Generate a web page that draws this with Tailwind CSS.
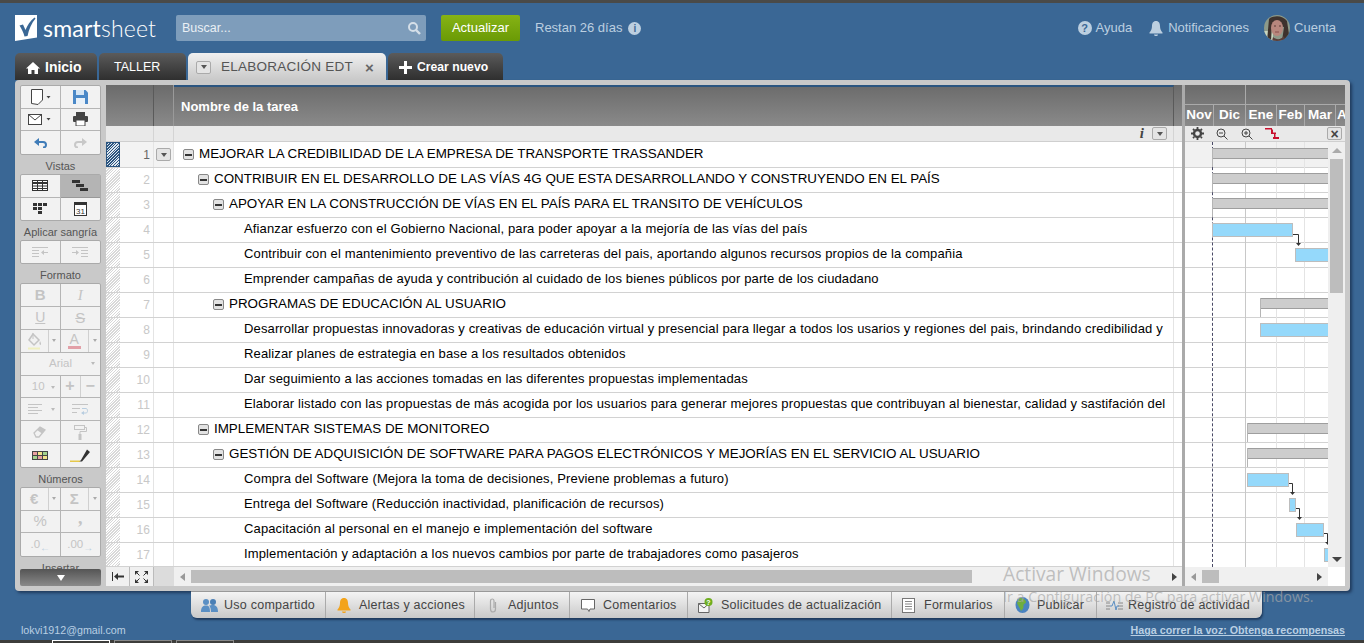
<!doctype html>
<html>
<head>
<meta charset="UTF-8" />
<title>Smartsheet</title>
<script src="https://cdn.jsdelivr.net/npm/@tailwindcss/browser@4"></script>
</head>
<body class="w-[1364px] h-[643px] overflow-hidden relative bg-[#3a6795] font-['Liberation_Sans',Arial,sans-serif] text-[13px] text-black">

<!-- top strip -->
<div class="h-[3px] bg-[#4a4a48]"></div>

<!-- header -->
<div class="h-[50px] pt-[12px] pl-[15px] pr-[28px] flex items-start">
    <svg class="w-[23px] h-[26px] shrink-0" viewBox="0 0 23 26"><path fill="#fff" d="M0 0H22V22.5L0 26Z"/><path fill="#3a6795" d="M4.5 10.5L8 9.500L10.500 15C12.500 10 15 6 19.500 2.500L20.500 3.500C16.500 8.500 14 14 12.500 21L9.500 21.500C8.500 17.500 6.500 13.500 4.500 10.500Z"/></svg>
    <div class="w-[138px] pl-[5px] h-[26px] leading-[26px] text-[23px] text-white font-['Lato',sans-serif] tracking-[0.2px]">smart<span class="font-light">sheet</span></div>
    <div class="w-[250px] h-[26px] rounded-[2px] bg-[#7e9dbb] flex items-center pl-[6px] pr-[5px] text-[#eaf0f5] text-[12.500px]">
        <span class="flex-1">Buscar...</span>
        <svg class="w-[14px] h-[14px]" viewBox="0 0 14 14"><circle cx="6" cy="6" r="4" fill="none" stroke="#d5dfe8" stroke-width="2"/><path d="M9 9L13 13" stroke="#d5dfe8" stroke-width="2.400"/></svg>
    </div>
    <div class="ml-[15px] w-[79px] h-[26px] rounded-[2px] bg-gradient-to-b from-[#86b315] to-[#6a9a05] text-white text-[13px] flex items-center justify-center">Actualizar</div>
    <div class="ml-[15px] h-[26px] flex items-center text-[#bccfe0] text-[13px]">Restan 26 días
        <span class="ml-[6px] w-[13px] h-[13px] rounded-full bg-[#bccfe0] text-[#3a6795] text-[10px] font-bold flex items-center justify-center">i</span>
    </div>
    <div class="ml-auto h-[26px] flex items-center text-[#bccfe0] text-[13px]">
        <span class="w-[14px] h-[14px] rounded-full bg-[#bccfe0] text-[#3a6795] text-[11px] font-bold flex items-center justify-center mr-[4px]">?</span>
        <span>Ayuda</span>
        <svg class="ml-[17px] mr-[5px] w-[14px] h-[15px]" viewBox="0 0 14 15"><path fill="#bccfe0" d="M7 0C10 0 11 2.500 11 5C11 8 12 10 13.500 11.500V12.500H.5V11.500C2 10 3 8 3 5C3 2.500 4 0 7 0ZM5 13.500H9C9 14.500 8 15 7 15S5 14.500 5 13.500Z"/></svg>
        <span>Notificaciones</span>
        <svg class="ml-[15px] mr-[4px] w-[26px] h-[26px]" viewBox="0 0 26 26"><defs><clipPath id="av"><circle cx="13" cy="13" r="13"/></clipPath></defs><g clip-path="url(#av)"><rect width="26" height="26" fill="#8d9a8a"/><rect x="0" y="16" width="9" height="10" fill="#c9d6c0"/><path d="M5 4C9 0 19 0 23 6L26 26H18L20 12L8 10L7 26H3Z" fill="#3e322d"/><ellipse cx="13" cy="13" rx="6" ry="8" fill="#b8877d"/><path d="M9 22C12 25 17 25 20 21L21 26H8Z" fill="#5a3d3a"/><path d="M10 11H12M15 11H17" stroke="#5b3b36" stroke-width="1"/><path d="M11 17H15" stroke="#8a4f4d" stroke-width="1"/></g></svg>
        <span>Cuenta</span>
    </div>
</div>

<!-- sheet tabs -->
<div class="h-[27px] pl-[15px] flex items-stretch">
    <div class="w-[82px] pt-[2px] rounded-t-[5px] bg-gradient-to-b from-[#5b5b5b] to-[#2f2f2f] text-white text-[14px] font-bold flex items-center pl-[11px]">
        <svg class="w-[14px] h-[12px] mr-[5px]" viewBox="0 0 14 12"><path fill="#fff" d="M7 0L14 6.500H12V12H8.500V8H5.500V12H2V6.500H0Z"/></svg>Inicio
    </div>
    <div class="ml-[2px] w-[87px] pt-[1px] rounded-t-[5px] bg-gradient-to-b from-[#5b5b5b] to-[#2f2f2f] text-white text-[12.500px] flex items-center pl-[15px]">TALLER</div>
    <div class="ml-[2px] w-[198px] pt-[1px] rounded-t-[5px] bg-gradient-to-b from-[#f0f0f0] to-[#c9c9c9] text-[#555] text-[13.500px] flex items-center pl-[8px]">
        <span class="w-[15px] h-[13px] border border-[#aaa] rounded-[2px] bg-[#e4e4e4] flex items-center justify-center mr-[10px]"><span class="border-x-[3.500px] border-x-transparent border-t-[4px] border-t-[#555]"></span></span>
        <span class="tracking-[0.25px]">ELABORACIÓN EDT</span>
        <span class="ml-[12px] text-[15px] font-bold leading-none text-[#666]">×</span>
    </div>
    <div class="ml-[2px] w-[115px] pt-[1px] rounded-t-[5px] bg-gradient-to-b from-[#5b5b5b] to-[#2f2f2f] text-white text-[12.200px] font-bold flex items-center pl-[11px]">
        <svg class="w-[13px] h-[13px] mr-[5px]" viewBox="0 0 13 13"><path d="M6.500 0V13M0 6.500H13" stroke="#fff" stroke-width="3"/></svg>Crear nuevo
    </div>
</div>

<!-- main panel -->
<div class="ml-[15px] w-[1335px] h-[511px] rounded-[4px] bg-[#c9c9c9] shadow-[2px_2px_3px_rgba(20,40,70,0.7)] pt-[5px] pr-[5px] pb-[5px] flex">

    <!-- toolbar -->
    <div class="w-[91px] h-[501px] shrink-0 pl-[5px] overflow-hidden flex flex-col relative text-[#555]">
        <div class="w-[81px] h-[70px] shrink-0 grid grid-cols-2 auto-rows-fr border border-[#aaa] rounded-[2px] bg-[#f2f2f2]">
            <div class="border-r border-b border-[#b5b5b5] flex items-center justify-center">
                <svg class="w-[24px] h-[16px]" viewBox="0 0 24 16"><path d="M3.500 .5H14.500V11L10 15.500L3.500 14.500Z" fill="#fff" stroke="#444"/><path d="M18.500 7H22.500L20.500 9.500Z" fill="#444"/></svg>
            </div>
            <div class="border-b border-[#b5b5b5] flex items-center justify-center">
                <svg class="w-[15px] h-[15px]" viewBox="0 0 15 15"><path fill="#4a88c7" d="M0 1H12.500L15 3.500V15H0Z"/><rect x="3" y="1" width="8" height="5" fill="#d6e6f5"/><rect x="3" y="9" width="9" height="6" fill="#e8f1f9"/></svg>
            </div>
            <div class="border-r border-b border-[#b5b5b5] flex items-center justify-center">
                <svg class="w-[24px] h-[11px]" viewBox="0 0 24 11"><rect x=".5" y=".5" width="13" height="10" fill="#fff" stroke="#444"/><path d="M.5 .5L7 6L13.500 .5" fill="none" stroke="#444"/><path d="M18.500 4H22.500L20.500 6.500Z" fill="#444"/></svg>
            </div>
            <div class="border-b border-[#b5b5b5] flex items-center justify-center">
                <svg class="w-[15px] h-[14px]" viewBox="0 0 15 14"><rect x="3" y="0" width="9" height="4" fill="#444"/><rect x="0" y="4" width="15" height="6" rx="1" fill="#444"/><rect x="3" y="8" width="9" height="6" fill="#fff" stroke="#444"/></svg>
            </div>
            <div class="border-r border-[#b5b5b5] flex items-center justify-center">
                <svg class="w-[13px] h-[11px]" viewBox="0 0 13 11"><path d="M3 5H9C11 5 12 6.500 12 8C12 9.500 11 10.500 9 10.500" fill="none" stroke="#3f7cb8" stroke-width="2"/><path d="M0 5L5 1V9Z" fill="#3f7cb8"/></svg>
            </div>
            <div class="flex items-center justify-center">
                <svg class="w-[13px] h-[11px]" viewBox="0 0 13 11"><path d="M10 5H4C2 5 1 6.500 1 8C1 9.500 2 10.500 4 10.500" fill="none" stroke="#c8c8c8" stroke-width="2"/><path d="M13 5L8 1V9Z" fill="#c8c8c8"/></svg>
            </div>
        </div>

        <div class="w-[81px] h-[19px] shrink-0 pt-[3px] text-center text-[11px] leading-[16px]">Vistas</div>
        <div class="w-[81px] h-[47px] shrink-0 grid grid-cols-2 auto-rows-fr border border-[#aaa] rounded-[2px] bg-[#f2f2f2]">
            <div class="border-r border-b border-[#b5b5b5] flex items-center justify-center">
                <svg class="w-[16px] h-[11px]" viewBox="0 0 16 11"><rect x=".5" y=".5" width="15" height="10" fill="#fff" stroke="#333"/><path d="M0 3H16" stroke="#333" stroke-width="2"/><path d="M0 6H16M0 8.500H16M5.500 0V11M10.500 0V11" stroke="#333"/></svg>
            </div>
            <div class="border-b border-[#999] bg-[#b4b4b4] flex items-center justify-center">
                <svg class="w-[16px] h-[11px]" viewBox="0 0 16 11"><path d="M0 0H8V3H0ZM4 4H12V7H4ZM8 8H16V11H8Z" fill="#333"/></svg>
            </div>
            <div class="border-r border-[#b5b5b5] flex items-center justify-center">
                <svg class="w-[14px] h-[11px]" viewBox="0 0 14 11"><path d="M0 0H4V3H0ZM5 0H9V3H5ZM10 0H14V3H10ZM0 4H4V7H0ZM5 4H9V7H5ZM5 8H9V11H5Z" fill="#333"/></svg>
            </div>
            <div class="flex items-center justify-center">
                <svg class="w-[13px] h-[15px]" viewBox="0 0 13 15"><rect x=".5" y="1.500" width="12" height="13" fill="#fff" stroke="#333"/><path d="M0 1H13V4H0Z" fill="#333"/><text x="6.500" y="12.500" text-anchor="middle" font-size="8" fill="#333" font-family="Liberation Sans">31</text></svg>
            </div>
        </div>

        <div class="w-[81px] h-[19px] shrink-0 pt-[3px] text-center text-[11px] leading-[16px]">Aplicar sangría</div>
        <div class="w-[81px] h-[24px] shrink-0 grid grid-cols-2 auto-rows-fr border border-[#aaa] rounded-[2px] bg-[#f2f2f2]">
            <div class="border-r border-[#b5b5b5] flex items-center justify-center">
                <svg class="w-[16px] h-[10px]" viewBox="0 0 16 10"><path d="M0 .5H16M0 3.500H7M0 6.500H7M0 9.500H7" stroke="#c4c4c4"/><path d="M9 5.500L12 3V5H16V6H12V8Z" fill="#c4c4c4"/></svg>
            </div>
            <div class="flex items-center justify-center">
                <svg class="w-[16px] h-[10px]" viewBox="0 0 16 10"><path d="M0 .5H16M9 3.500H16M9 6.500H16M9 9.500H16" stroke="#c4c4c4"/><path d="M7 5.500L4 3V5H0V6H4V8Z" fill="#c4c4c4"/></svg>
            </div>
        </div>

        <div class="w-[81px] h-[19px] shrink-0 pt-[3px] text-center text-[11px] leading-[16px]">Formato</div>
        <div class="w-[81px] h-[185px] shrink-0 grid grid-cols-2 auto-rows-fr border border-[#aaa] rounded-[2px] bg-[#f2f2f2] text-[#c4c4c4]">
            <div class="border-r border-b border-[#b5b5b5] flex items-center justify-center text-[15px] font-bold">B</div>
            <div class="border-b border-[#b5b5b5] flex items-center justify-center text-[15px] italic font-['Liberation_Serif',serif]">I</div>
            <div class="border-r border-b border-[#b5b5b5] flex items-center justify-center text-[14px] underline">U</div>
            <div class="border-b border-[#b5b5b5] flex items-center justify-center text-[15px] line-through">S</div>
            <div class="border-r border-b border-[#b5b5b5] flex items-stretch">
                <div class="flex-1 flex items-center justify-center"><svg class="w-[15px] h-[18px]" viewBox="0 0 15 18"><path d="M6 2L12 8L7 13L2 8Z" fill="none" stroke="#c4c4c4" stroke-width="1.500"/><path d="M6 1V7" stroke="#c4c4c4"/><path d="M13 9C14 11 14.500 12 13.500 13C12.500 13 12 11 13 9Z" fill="#c4c4c4"/><rect x="1" y="15.500" width="12" height="2" fill="#efefc0"/></svg></div>
                <div class="w-[12px] border-l border-[#d0d0d0] flex items-center justify-center"><span class="border-x-[2.500px] border-x-transparent border-t-[3px] border-t-[#aaa]"></span></div>
            </div>
            <div class="border-b border-[#b5b5b5] flex items-stretch">
                <div class="flex-1 flex flex-col items-center justify-center leading-[13px] text-[14px]">A<span class="w-[13px] h-[3px] bg-[#e2a0a8]"></span></div>
                <div class="w-[12px] border-l border-[#d0d0d0] flex items-center justify-center"><span class="border-x-[2.500px] border-x-transparent border-t-[3px] border-t-[#aaa]"></span></div>
            </div>
            <div class="col-span-2 border-b border-[#b5b5b5] flex items-center justify-center text-[11.500px] relative">Arial<span class="absolute right-[5px] top-[9px] border-x-[2.500px] border-x-transparent border-t-[3px] border-t-[#bbb]"></span></div>
            <div class="border-r border-b border-[#b5b5b5] flex items-center justify-center text-[11.500px] relative pr-[4px]">10<span class="absolute right-[5px] top-[10px] border-x-[2.500px] border-x-transparent border-t-[3px] border-t-[#bbb]"></span></div>
            <div class="border-b border-[#b5b5b5] flex items-stretch">
                <div class="w-[20px] border-r border-[#d0d0d0] flex items-center justify-center text-[16px] font-bold">+</div>
                <div class="flex-1 flex items-center justify-center text-[16px] font-bold">−</div>
            </div>
            <div class="border-r border-b border-[#b5b5b5] flex items-center justify-center relative pr-[10px]">
                <svg class="w-[14px] h-[11px]" viewBox="0 0 14 11"><path d="M0 .5H14M0 3.500H10M0 6.500H14M0 9.500H10" stroke="#c4c4c4"/></svg>
                <span class="absolute right-[5px] top-[10px] border-x-[2.500px] border-x-transparent border-t-[3px] border-t-[#bbb]"></span>
            </div>
            <div class="border-b border-[#b5b5b5] flex items-center justify-center">
                <svg class="w-[17px] h-[11px]" viewBox="0 0 17 11"><path d="M0 .5H16M0 4.500H8M0 8.500H5" stroke="#c4c4c4"/><path d="M10 4.500H14C16 4.500 16 9 14 9H10" fill="none" stroke="#b8cde0"/><path d="M12 7L9 9L12 11Z" fill="#b8cde0"/></svg>
            </div>
            <div class="border-r border-b border-[#b5b5b5] flex items-center justify-center">
                <svg class="w-[15px] h-[12px]" viewBox="0 0 15 12"><path d="M1 7L7 1L12 4L6 11H3Z" fill="none" stroke="#c4c4c4" stroke-width="1.300"/><path d="M7 1L12 4L9 7.500L4 4Z" fill="#c4c4c4"/></svg>
            </div>
            <div class="border-b border-[#b5b5b5] flex items-center justify-center">
                <svg class="w-[13px] h-[15px]" viewBox="0 0 13 15"><rect x=".5" y=".5" width="10" height="4" fill="none" stroke="#c4c4c4"/><path d="M11 2.500H12.500V6.500H6V9" fill="none" stroke="#c4c4c4"/><rect x="4.500" y="9" width="3" height="6" fill="#c4c4c4"/></svg>
            </div>
            <div class="border-r border-[#b5b5b5] flex items-center justify-center">
                <svg class="w-[16px] h-[9px]" viewBox="0 0 16 9"><rect width="16" height="9" fill="#444"/><path d="M1 1H5V4H1Z" fill="#e8a0a0"/><path d="M6 1H10V4H6Z" fill="#f3e58a"/><path d="M11 1H15V4H11Z" fill="#a4d38d"/><path d="M1 5H5V8H1Z" fill="#a4d38d"/><path d="M6 5H10V8H6Z" fill="#e8a0a0"/><path d="M11 5H15V8H11Z" fill="#f3e58a"/></svg>
            </div>
            <div class="flex items-center justify-center">
                <svg class="w-[20px] h-[13px]" viewBox="0 0 20 13"><path d="M0 11.500H10V13H0Z" fill="#e6c84a"/><path d="M11 11L9.500 12.500L12 12.500L20 3L17 .5Z" fill="#333"/></svg>
            </div>
        </div>

        <div class="w-[81px] h-[19px] shrink-0 pt-[3px] text-center text-[11px] leading-[16px]">Números</div>
        <div class="w-[81px] h-[70px] shrink-0 grid grid-cols-2 auto-rows-fr border border-[#aaa] rounded-[2px] bg-[#f2f2f2] text-[#c4c4c4]">
            <div class="border-r border-b border-[#b5b5b5] flex items-stretch">
                <div class="flex-1 flex items-center justify-center text-[15px] font-bold">€</div>
                <div class="w-[12px] border-l border-[#d0d0d0] flex items-center justify-center"><span class="border-x-[2.500px] border-x-transparent border-t-[3px] border-t-[#aaa]"></span></div>
            </div>
            <div class="border-b border-[#b5b5b5] flex items-stretch">
                <div class="flex-1 flex items-center justify-center text-[15px] font-bold">Σ</div>
                <div class="w-[12px] border-l border-[#d0d0d0] flex items-center justify-center"><span class="border-x-[2.500px] border-x-transparent border-t-[3px] border-t-[#aaa]"></span></div>
            </div>
            <div class="border-r border-b border-[#b5b5b5] flex items-center justify-center text-[15px]">%</div>
            <div class="border-b border-[#b5b5b5] flex items-center justify-center text-[18px] font-bold font-['Liberation_Serif',serif] pb-[6px]">,</div>
            <div class="border-r border-[#b5b5b5] flex items-center justify-center text-[11.500px]">.0<span class="text-[#b8cde0] text-[10px] mt-[5px]">←</span></div>
            <div class="flex items-center justify-center text-[11.500px]">.00<span class="text-[#b8cde0] text-[10px] mt-[5px]">→</span></div>
        </div>

        <div class="w-[81px] pt-[3px] text-center text-[11px] leading-[16px]">Insertar</div>
        <!-- toolbar scroll button -->
        <div class="absolute left-[5px] bottom-0 w-[81px] h-[17px] rounded-[2px] bg-gradient-to-b from-[#555] to-[#8a8a8a] flex items-center justify-center">
            <span class="border-x-[4px] border-x-transparent border-t-[6px] border-t-white"></span>
        </div>
    </div>

    <!-- sheet -->
    <div class="flex-1 h-[501px] bg-[#f0f0f0] flex min-w-0">

        <!-- grid side -->
        <div class="w-[1076px] shrink-0 flex flex-col">
            <div class="h-[41px] bg-gradient-to-b from-[#6b6b6b] to-[#8a8a8a] flex">
                <div class="w-[48px] border-r border-[#5a5a5a]"></div>
                <div class="w-[20px] border-r border-[#9a9a9a]"></div>
                <div class="w-[1000px] border-t-2 border-t-[#2b5580] border-r border-r-[#5a5a5a] pl-[7px] pt-[1px] text-[13px] font-bold text-white flex items-center">Nombre de la tarea</div>
            </div>
            <div class="h-[16px] bg-[#e9e9e9] border-b border-[#cfcfcf] flex">
                <div class="w-[48px] border-r border-[#d4d4d4]"></div>
                <div class="w-[20px] border-r border-[#d4d4d4]"></div>
                <div class="w-[1000px] border-r border-[#d4d4d4] flex items-center justify-end pr-[6px]">
                    <span class="font-['Liberation_Serif',serif] italic font-bold text-[15px] leading-none text-[#444] mr-[8px]">i</span>
                    <span class="w-[15px] h-[13px] border border-[#aaa] rounded-[2px] bg-[#e4e4e4] flex items-center justify-center"><span class="border-x-[3.500px] border-x-transparent border-t-[4px] border-t-[#555]"></span></span>
                </div>
            </div>

            <div class="h-[425px] bg-white overflow-hidden flex flex-col">
                <!-- row 1 -->
                <div class="h-[26px] shrink-0 flex border-b border-[#d2d2d2] text-[13.400px]">
                    <div class="w-[48px] shrink-0 flex items-center border-r border-[#e4e4e4] bg-[#f3f3f3]"><span class="w-[14px] h-[25px] border border-[#2b5580] bg-[repeating-linear-gradient(135deg,#2b5580_0,#2b5580_1px,#dfe7ef_1px,#dfe7ef_2px)]"></span><span class="flex-1 text-right pr-[3px] text-[12px] text-[#666]">1</span></div>
                    <div class="w-[20px] shrink-0 border-r border-[#e4e4e4] bg-[#f3f3f3] flex items-center justify-center"><span class="w-[15px] h-[13px] border border-[#aaa] rounded-[2px] bg-[#e4e4e4] flex items-center justify-center"><span class="border-x-[3.500px] border-x-transparent border-t-[4px] border-t-[#555]"></span></span></div>
                    <div class="w-[1000px] shrink-0 border-r border-[#e4e4e4] overflow-hidden whitespace-nowrap flex items-center pl-[9px]"><span class="w-[11px] h-[11px] rounded-[2px] border border-[#888] bg-[#e2e2e2] flex items-center justify-center mr-[5px]"><span class="w-[7px] h-[2px] bg-[#333]"></span></span>MEJORAR LA CREDIBILIDAD DE LA EMPRESA DE TRANSPORTE TRASSANDER</div>
                </div>
                <!-- row 2 -->
                <div class="h-[25px] shrink-0 flex border-b border-[#d2d2d2] text-[13.400px]">
                    <div class="w-[48px] shrink-0 flex items-center border-r border-[#e4e4e4]"><span class="w-[14px] h-[24px] bg-[repeating-linear-gradient(135deg,#d8d8d8_0,#d8d8d8_1px,#fff_1px,#fff_2px)]"></span><span class="flex-1 text-right pr-[3px] text-[12px] text-[#c8c8c8]">2</span></div>
                    <div class="w-[20px] shrink-0 border-r border-[#e4e4e4]"></div>
                    <div class="w-[1000px] shrink-0 border-r border-[#e4e4e4] overflow-hidden whitespace-nowrap flex items-center pb-[1px] pl-[24px]"><span class="w-[11px] h-[11px] rounded-[2px] border border-[#888] bg-[#e2e2e2] flex items-center justify-center mr-[5px]"><span class="w-[7px] h-[2px] bg-[#333]"></span></span>CONTRIBUIR EN EL DESARROLLO DE LAS VÍAS 4G QUE ESTA DESARROLLANDO Y CONSTRUYENDO EN EL PAÍS</div>
                </div>
                <!-- row 3 -->
                <div class="h-[25px] shrink-0 flex border-b border-[#d2d2d2] text-[13.400px]">
                    <div class="w-[48px] shrink-0 flex items-center border-r border-[#e4e4e4]"><span class="w-[14px] h-[24px] bg-[repeating-linear-gradient(135deg,#d8d8d8_0,#d8d8d8_1px,#fff_1px,#fff_2px)]"></span><span class="flex-1 text-right pr-[3px] text-[12px] text-[#c8c8c8]">3</span></div>
                    <div class="w-[20px] shrink-0 border-r border-[#e4e4e4]"></div>
                    <div class="w-[1000px] shrink-0 border-r border-[#e4e4e4] overflow-hidden whitespace-nowrap flex items-center pb-[1px] pl-[39px]"><span class="w-[11px] h-[11px] rounded-[2px] border border-[#888] bg-[#e2e2e2] flex items-center justify-center mr-[5px]"><span class="w-[7px] h-[2px] bg-[#333]"></span></span>APOYAR EN LA CONSTRUCCIÓN DE VÍAS EN EL PAÍS PARA EL TRANSITO DE VEHÍCULOS</div>
                </div>
                <!-- row 4 -->
                <div class="h-[25px] shrink-0 flex border-b border-[#d2d2d2] text-[13px] tracking-[0.135px]">
                    <div class="w-[48px] shrink-0 flex items-center border-r border-[#e4e4e4]"><span class="w-[14px] h-[24px] bg-[repeating-linear-gradient(135deg,#d8d8d8_0,#d8d8d8_1px,#fff_1px,#fff_2px)]"></span><span class="flex-1 text-right pr-[3px] text-[12px] text-[#c8c8c8]">4</span></div>
                    <div class="w-[20px] shrink-0 border-r border-[#e4e4e4]"></div>
                    <div class="w-[1000px] shrink-0 border-r border-[#e4e4e4] overflow-hidden whitespace-nowrap flex items-center pb-[2px] pl-[70px]">Afianzar esfuerzo con el Gobierno Nacional, para poder apoyar a la mejoría de las vías del país</div>
                </div>
                <!-- row 5 -->
                <div class="h-[25px] shrink-0 flex border-b border-[#d2d2d2] text-[13px] tracking-[0.135px]">
                    <div class="w-[48px] shrink-0 flex items-center border-r border-[#e4e4e4]"><span class="w-[14px] h-[24px] bg-[repeating-linear-gradient(135deg,#d8d8d8_0,#d8d8d8_1px,#fff_1px,#fff_2px)]"></span><span class="flex-1 text-right pr-[3px] text-[12px] text-[#c8c8c8]">5</span></div>
                    <div class="w-[20px] shrink-0 border-r border-[#e4e4e4]"></div>
                    <div class="w-[1000px] shrink-0 border-r border-[#e4e4e4] overflow-hidden whitespace-nowrap flex items-center pb-[2px] pl-[70px]">Contribuir con el mantenimiento preventivo de las carreteras del pais, aportando algunos recursos propios de la compañia</div>
                </div>
                <!-- row 6 -->
                <div class="h-[25px] shrink-0 flex border-b border-[#d2d2d2] text-[13px] tracking-[0.135px]">
                    <div class="w-[48px] shrink-0 flex items-center border-r border-[#e4e4e4]"><span class="w-[14px] h-[24px] bg-[repeating-linear-gradient(135deg,#d8d8d8_0,#d8d8d8_1px,#fff_1px,#fff_2px)]"></span><span class="flex-1 text-right pr-[3px] text-[12px] text-[#c8c8c8]">6</span></div>
                    <div class="w-[20px] shrink-0 border-r border-[#e4e4e4]"></div>
                    <div class="w-[1000px] shrink-0 border-r border-[#e4e4e4] overflow-hidden whitespace-nowrap flex items-center pb-[2px] pl-[70px]">Emprender campañas de ayuda y contribución al cuidado de los bienes públicos por parte de los ciudadano</div>
                </div>
                <!-- row 7 -->
                <div class="h-[25px] shrink-0 flex border-b border-[#d2d2d2] text-[13.400px]">
                    <div class="w-[48px] shrink-0 flex items-center border-r border-[#e4e4e4]"><span class="w-[14px] h-[24px] bg-[repeating-linear-gradient(135deg,#d8d8d8_0,#d8d8d8_1px,#fff_1px,#fff_2px)]"></span><span class="flex-1 text-right pr-[3px] text-[12px] text-[#c8c8c8]">7</span></div>
                    <div class="w-[20px] shrink-0 border-r border-[#e4e4e4]"></div>
                    <div class="w-[1000px] shrink-0 border-r border-[#e4e4e4] overflow-hidden whitespace-nowrap flex items-center pb-[1px] pl-[39px]"><span class="w-[11px] h-[11px] rounded-[2px] border border-[#888] bg-[#e2e2e2] flex items-center justify-center mr-[5px]"><span class="w-[7px] h-[2px] bg-[#333]"></span></span>PROGRAMAS DE EDUCACIÓN AL USUARIO</div>
                </div>
                <!-- row 8 -->
                <div class="h-[25px] shrink-0 flex border-b border-[#d2d2d2] text-[13px] tracking-[0.135px]">
                    <div class="w-[48px] shrink-0 flex items-center border-r border-[#e4e4e4]"><span class="w-[14px] h-[24px] bg-[repeating-linear-gradient(135deg,#d8d8d8_0,#d8d8d8_1px,#fff_1px,#fff_2px)]"></span><span class="flex-1 text-right pr-[3px] text-[12px] text-[#c8c8c8]">8</span></div>
                    <div class="w-[20px] shrink-0 border-r border-[#e4e4e4]"></div>
                    <div class="w-[1000px] shrink-0 border-r border-[#e4e4e4] overflow-hidden whitespace-nowrap flex items-center pb-[2px] pl-[70px]">Desarrollar propuestas innovadoras y creativas de educación virtual y presencial para llegar a todos los usarios y regiones del pais, brindando credibilidad y</div>
                </div>
                <!-- row 9 -->
                <div class="h-[25px] shrink-0 flex border-b border-[#d2d2d2] text-[13px] tracking-[0.135px]">
                    <div class="w-[48px] shrink-0 flex items-center border-r border-[#e4e4e4]"><span class="w-[14px] h-[24px] bg-[repeating-linear-gradient(135deg,#d8d8d8_0,#d8d8d8_1px,#fff_1px,#fff_2px)]"></span><span class="flex-1 text-right pr-[3px] text-[12px] text-[#c8c8c8]">9</span></div>
                    <div class="w-[20px] shrink-0 border-r border-[#e4e4e4]"></div>
                    <div class="w-[1000px] shrink-0 border-r border-[#e4e4e4] overflow-hidden whitespace-nowrap flex items-center pb-[2px] pl-[70px]">Realizar planes de estrategia en base a los resultados obtenidos</div>
                </div>
                <!-- row 10 -->
                <div class="h-[25px] shrink-0 flex border-b border-[#d2d2d2] text-[13px] tracking-[0.135px]">
                    <div class="w-[48px] shrink-0 flex items-center border-r border-[#e4e4e4]"><span class="w-[14px] h-[24px] bg-[repeating-linear-gradient(135deg,#d8d8d8_0,#d8d8d8_1px,#fff_1px,#fff_2px)]"></span><span class="flex-1 text-right pr-[3px] text-[12px] text-[#c8c8c8]">10</span></div>
                    <div class="w-[20px] shrink-0 border-r border-[#e4e4e4]"></div>
                    <div class="w-[1000px] shrink-0 border-r border-[#e4e4e4] overflow-hidden whitespace-nowrap flex items-center pb-[2px] pl-[70px]">Dar seguimiento a las acciones tomadas en las diferentes propuestas implementadas</div>
                </div>
                <!-- row 11 -->
                <div class="h-[25px] shrink-0 flex border-b border-[#d2d2d2] text-[13px] tracking-[0.135px]">
                    <div class="w-[48px] shrink-0 flex items-center border-r border-[#e4e4e4]"><span class="w-[14px] h-[24px] bg-[repeating-linear-gradient(135deg,#d8d8d8_0,#d8d8d8_1px,#fff_1px,#fff_2px)]"></span><span class="flex-1 text-right pr-[3px] text-[12px] text-[#c8c8c8]">11</span></div>
                    <div class="w-[20px] shrink-0 border-r border-[#e4e4e4]"></div>
                    <div class="w-[1000px] shrink-0 border-r border-[#e4e4e4] overflow-hidden whitespace-nowrap flex items-center pb-[2px] pl-[70px]">Elaborar listado con las propuestas de más acogida por los usuarios para generar mejores propuestas que contribuyan al bienestar, calidad y sastifación del</div>
                </div>
                <!-- row 12 -->
                <div class="h-[25px] shrink-0 flex border-b border-[#d2d2d2] text-[13.400px]">
                    <div class="w-[48px] shrink-0 flex items-center border-r border-[#e4e4e4]"><span class="w-[14px] h-[24px] bg-[repeating-linear-gradient(135deg,#d8d8d8_0,#d8d8d8_1px,#fff_1px,#fff_2px)]"></span><span class="flex-1 text-right pr-[3px] text-[12px] text-[#c8c8c8]">12</span></div>
                    <div class="w-[20px] shrink-0 border-r border-[#e4e4e4]"></div>
                    <div class="w-[1000px] shrink-0 border-r border-[#e4e4e4] overflow-hidden whitespace-nowrap flex items-center pb-[1px] pl-[24px]"><span class="w-[11px] h-[11px] rounded-[2px] border border-[#888] bg-[#e2e2e2] flex items-center justify-center mr-[5px]"><span class="w-[7px] h-[2px] bg-[#333]"></span></span>IMPLEMENTAR SISTEMAS DE MONITOREO</div>
                </div>
                <!-- row 13 -->
                <div class="h-[25px] shrink-0 flex border-b border-[#d2d2d2] text-[13.400px]">
                    <div class="w-[48px] shrink-0 flex items-center border-r border-[#e4e4e4]"><span class="w-[14px] h-[24px] bg-[repeating-linear-gradient(135deg,#d8d8d8_0,#d8d8d8_1px,#fff_1px,#fff_2px)]"></span><span class="flex-1 text-right pr-[3px] text-[12px] text-[#c8c8c8]">13</span></div>
                    <div class="w-[20px] shrink-0 border-r border-[#e4e4e4]"></div>
                    <div class="w-[1000px] shrink-0 border-r border-[#e4e4e4] overflow-hidden whitespace-nowrap flex items-center pb-[1px] pl-[39px]"><span class="w-[11px] h-[11px] rounded-[2px] border border-[#888] bg-[#e2e2e2] flex items-center justify-center mr-[5px]"><span class="w-[7px] h-[2px] bg-[#333]"></span></span>GESTIÓN DE ADQUISICIÓN DE SOFTWARE PARA PAGOS ELECTRÓNICOS Y MEJORÍAS EN EL SERVICIO AL USUARIO</div>
                </div>
                <!-- row 14 -->
                <div class="h-[25px] shrink-0 flex border-b border-[#d2d2d2] text-[13px] tracking-[0.135px]">
                    <div class="w-[48px] shrink-0 flex items-center border-r border-[#e4e4e4]"><span class="w-[14px] h-[24px] bg-[repeating-linear-gradient(135deg,#d8d8d8_0,#d8d8d8_1px,#fff_1px,#fff_2px)]"></span><span class="flex-1 text-right pr-[3px] text-[12px] text-[#c8c8c8]">14</span></div>
                    <div class="w-[20px] shrink-0 border-r border-[#e4e4e4]"></div>
                    <div class="w-[1000px] shrink-0 border-r border-[#e4e4e4] overflow-hidden whitespace-nowrap flex items-center pb-[2px] pl-[70px]">Compra del Software (Mejora la toma de decisiones, Previene problemas a futuro)</div>
                </div>
                <!-- row 15 -->
                <div class="h-[25px] shrink-0 flex border-b border-[#d2d2d2] text-[13px] tracking-[0.135px]">
                    <div class="w-[48px] shrink-0 flex items-center border-r border-[#e4e4e4]"><span class="w-[14px] h-[24px] bg-[repeating-linear-gradient(135deg,#d8d8d8_0,#d8d8d8_1px,#fff_1px,#fff_2px)]"></span><span class="flex-1 text-right pr-[3px] text-[12px] text-[#c8c8c8]">15</span></div>
                    <div class="w-[20px] shrink-0 border-r border-[#e4e4e4]"></div>
                    <div class="w-[1000px] shrink-0 border-r border-[#e4e4e4] overflow-hidden whitespace-nowrap flex items-center pb-[2px] pl-[70px]">Entrega del Software (Reducción inactividad, planificación de recursos)</div>
                </div>
                <!-- row 16 -->
                <div class="h-[25px] shrink-0 flex border-b border-[#d2d2d2] text-[13px] tracking-[0.135px]">
                    <div class="w-[48px] shrink-0 flex items-center border-r border-[#e4e4e4]"><span class="w-[14px] h-[24px] bg-[repeating-linear-gradient(135deg,#d8d8d8_0,#d8d8d8_1px,#fff_1px,#fff_2px)]"></span><span class="flex-1 text-right pr-[3px] text-[12px] text-[#c8c8c8]">16</span></div>
                    <div class="w-[20px] shrink-0 border-r border-[#e4e4e4]"></div>
                    <div class="w-[1000px] shrink-0 border-r border-[#e4e4e4] overflow-hidden whitespace-nowrap flex items-center pb-[2px] pl-[70px]">Capacitación al personal en el manejo e implementación del software</div>
                </div>
                <!-- row 17 -->
                <div class="h-[24px] shrink-0 flex border-b border-[#d2d2d2] text-[13px] tracking-[0.135px]">
                    <div class="w-[48px] shrink-0 flex items-center border-r border-[#e4e4e4]"><span class="w-[14px] h-[23px] bg-[repeating-linear-gradient(135deg,#d8d8d8_0,#d8d8d8_1px,#fff_1px,#fff_2px)]"></span><span class="flex-1 text-right pr-[3px] text-[12px] text-[#c8c8c8]">17</span></div>
                    <div class="w-[20px] shrink-0 border-r border-[#e4e4e4]"></div>
                    <div class="w-[1000px] shrink-0 border-r border-[#e4e4e4] overflow-hidden whitespace-nowrap flex items-center pb-[2px] pl-[70px]">Implementación y adaptación a los nuevos cambios por parte de trabajadores como pasajeros</div>
                </div>
            </div>

            <!-- grid footer -->
            <div class="h-[19px] bg-[#f0f0f0] flex items-center">
                <div class="w-[24px] h-[19px] border-r border-[#bbb] flex items-center justify-center">
                    <svg class="w-[12px] h-[9px]" viewBox="0 0 12 9"><path d="M.5 0V9" stroke="#333"/><path d="M2 4.500L6 1V3.500H12V5.500H6V8Z" fill="#333"/></svg>
                </div>
                <div class="w-[24px] h-[19px] border-r border-[#bbb] flex items-center justify-center">
                    <svg class="w-[13px] h-[12px]" viewBox="0 0 13 12"><path d="M0 0H4L0 4ZM13 0H9L13 4ZM0 12H4L0 8ZM13 12H9L13 8Z" fill="#333"/><path d="M2 2L4.500 4.500M11 2L8.500 4.500M2 10L4.500 7.500M11 10L8.500 7.500" stroke="#333"/></svg>
                </div>
                <div class="w-[20px] h-[19px] bg-[#dcdcdc]"></div>
                <div class="w-[17px] flex justify-center"><span class="border-y-[4px] border-y-transparent border-r-[5px] border-r-[#999]"></span></div>
                <div class="w-[781px] h-[13px] bg-[#bdbdbd]"></div>
                <div class="flex-1 flex justify-end pr-[5px]"><span class="border-y-[4px] border-y-transparent border-l-[5px] border-l-[#444]"></span></div>
            </div>
        </div>

        <!-- splitter -->
        <div class="w-[3px] shrink-0 bg-[#aaa]"></div>

        <!-- gantt side -->
        <div class="w-[160px] shrink-0 flex flex-col">
            <div class="h-[41px] bg-gradient-to-b from-[#6b6b6b] to-[#8a8a8a] flex flex-col text-white text-[13.500px] font-bold">
                <div class="h-[20px] border-b border-[#aaa]"><div class="w-[61px] h-full border-r border-[#aaa]"></div></div>
                <div class="h-[21px] flex overflow-hidden leading-[19px] text-center">
                    <span class="w-[29px] shrink-0 border-r border-[#aaa]">Nov</span>
                    <span class="w-[32px] shrink-0 border-r border-[#aaa]">Dic</span>
                    <span class="w-[31px] shrink-0 border-r border-[#aaa]">Ene</span>
                    <span class="w-[28px] shrink-0 border-r border-[#aaa]">Feb</span>
                    <span class="w-[31px] shrink-0 border-r border-[#aaa]">Mar</span>
                    <span class="w-[9px] shrink-0 text-left pl-[1px]">A</span>
                </div>
            </div>
            <div class="h-[16px] bg-[#e9e9e9] border-b border-[#cfcfcf] flex items-center">
                <svg class="ml-[6px] w-[13px] h-[13px]" viewBox="0 0 13 13"><circle cx="6.500" cy="6.500" r="3.500" fill="none" stroke="#444" stroke-width="2.400"/><path d="M6.500 0V13M0 6.500H13M2 2L11 11M11 2L2 11" stroke="#444" stroke-width="1.800" stroke-dasharray="2 9"/></svg>
                <svg class="ml-[12px] w-[12px] h-[12px]" viewBox="0 0 12 12"><circle cx="5" cy="5" r="4" fill="none" stroke="#444"/><path d="M3 5H7M8 8L11.500 11.500" stroke="#444"/></svg>
                <svg class="ml-[13px] w-[12px] h-[12px]" viewBox="0 0 12 12"><circle cx="5" cy="5" r="4" fill="none" stroke="#444"/><path d="M3 5H7M5 3V7M8 8L11.500 11.500" stroke="#444"/></svg>
                <svg class="ml-[12px] w-[14px] h-[11px]" viewBox="0 0 14 11"><path d="M0 0H7V1.500H0ZM6 1.500H8V4.500H6ZM6 4.500H11V6H6ZM9 6H10.500V9H9ZM8 9H14V11H8Z" fill="#c8102e"/></svg>
                <span class="ml-auto mr-[3px] w-[15px] h-[13px] border border-[#aaa] rounded-[2px] bg-[#e4e4e4] flex items-center justify-center text-[14px] font-bold leading-none text-[#444]">×</span>
            </div>
            <div class="h-[425px] flex">
                <!-- timeline canvas -->
                <div class="w-[143px] h-[425px] relative overflow-hidden bg-white bg-[repeating-linear-gradient(to_bottom,#d2d2d2_0,#d2d2d2_1px,transparent_1px,transparent_25px)]">
                    <div class="absolute left-0 top-0 w-full h-[25px] bg-[#f1f1f1]"></div>
                    <div class="absolute left-[60px] top-0 h-full w-px bg-[#c8c8c8]"></div>
                    <div class="absolute left-[91px] top-0 h-full w-px bg-[#e4e4e4]"></div>
                    <div class="absolute left-[119px] top-0 h-full w-px bg-[#e4e4e4]"></div>
                    <div class="absolute left-[27px] top-0 h-full border-l border-dashed border-[#4a4a66]"></div>

                    <div class="absolute left-[27px] top-[6px] w-[116px] h-[11px] bg-[#cdcdcd] border-y border-[#9e9e9e]"></div>
                    <div class="absolute left-[27px] top-[6px] w-px h-[19px] bg-[#b5b5b5]"></div>
                    <div class="absolute left-[27px] top-[31px] w-[116px] h-[11px] bg-[#cdcdcd] border-y border-[#9e9e9e]"></div>
                    <div class="absolute left-[27px] top-[31px] w-px h-[19px] bg-[#b5b5b5]"></div>
                    <div class="absolute left-[27px] top-[56px] w-[116px] h-[11px] bg-[#cdcdcd] border-y border-[#9e9e9e]"></div>
                    <div class="absolute left-[27px] top-[56px] w-px h-[19px] bg-[#b5b5b5]"></div>
                    <div class="absolute left-[27px] top-[81px] w-[81px] h-[14px] bg-[#95d9fb] border border-[#bdbdbd]"></div>
                    <div class="absolute left-[110px] top-[106px] w-[33px] h-[14px] bg-[#95d9fb] border border-[#bdbdbd] border-r-0"></div>
                    <div class="absolute left-[75px] top-[156px] w-[68px] h-[11px] bg-[#cdcdcd] border-y border-l border-[#9e9e9e]"></div>
                    <div class="absolute left-[75px] top-[156px] w-px h-[19px] bg-[#b5b5b5]"></div>
                    <div class="absolute left-[75px] top-[181px] w-[68px] h-[14px] bg-[#95d9fb] border border-[#bdbdbd] border-r-0"></div>
                    <div class="absolute left-[62px] top-[281px] w-[81px] h-[11px] bg-[#cdcdcd] border-y border-l border-[#9e9e9e]"></div>
                    <div class="absolute left-[62px] top-[281px] w-px h-[19px] bg-[#b5b5b5]"></div>
                    <div class="absolute left-[62px] top-[306px] w-[81px] h-[11px] bg-[#cdcdcd] border-y border-l border-[#9e9e9e]"></div>
                    <div class="absolute left-[62px] top-[306px] w-px h-[19px] bg-[#b5b5b5]"></div>
                    <div class="absolute left-[62px] top-[331px] w-[42px] h-[14px] bg-[#95d9fb] border border-[#bdbdbd]"></div>
                    <div class="absolute left-[104px] top-[356px] w-[7px] h-[14px] bg-[#95d9fb] border border-[#bdbdbd]"></div>
                    <div class="absolute left-[111px] top-[381px] w-[28px] h-[14px] bg-[#95d9fb] border border-[#bdbdbd]"></div>
                    <div class="absolute left-[139px] top-[406px] w-[4px] h-[14px] bg-[#95d9fb] border border-[#bdbdbd] border-r-0"></div>

                    <!-- dependency arrows -->
                    <svg class="absolute left-0 top-0 w-[143px] h-[425px]" viewBox="0 0 143 425">
                        <path d="M108 92.500H113.500V101" fill="none" stroke="#333"/><path d="M111 101H116L113.500 104Z" fill="#333"/>
                        <path d="M104 341.500H107.500V350" fill="none" stroke="#333"/><path d="M105 350H110L107.500 353Z" fill="#333"/>
                        <path d="M111 366.500H114.500V375" fill="none" stroke="#333"/><path d="M112 375H117L114.500 378Z" fill="#333"/>
                        <path d="M139 391.500H142.500V400" fill="none" stroke="#333"/><path d="M140 400H143V403Z" fill="#333"/>
                    </svg>
                </div>
                <!-- vertical scrollbar -->
                <div class="w-[17px] h-[425px] bg-[#efefef] flex flex-col items-center">
                    <span class="mt-[6px] border-x-[5px] border-x-transparent border-b-[5px] border-b-[#aaa]"></span>
                    <div class="mt-[6px] w-[13px] h-[134px] bg-[#bdbdbd]"></div>
                    <span class="mt-auto mb-[5px] border-x-[5px] border-x-transparent border-t-[5px] border-t-[#444]"></span>
                </div>
            </div>
            <div class="h-[19px] flex items-center">
                <div class="w-[143px] h-[19px] bg-[#f0f0f0] flex items-center pl-[6px] pr-[6px]">
                    <span class="border-y-[4px] border-y-transparent border-r-[5px] border-r-[#999]"></span>
                    <div class="ml-[6px] w-[17px] h-[13px] bg-[#bdbdbd]"></div>
                    <span class="ml-auto border-y-[4px] border-y-transparent border-l-[5px] border-l-[#444]"></span>
                </div>
                <div class="w-[17px] h-[19px] bg-white"></div>
            </div>
        </div>
    </div>
</div>

<!-- bottom tabs -->
<div class="ml-[191px] w-[1071px] h-[27px] rounded-b-[6px] bg-gradient-to-b from-[#f4f4f4] to-[#c9c9c9] shadow-[1px_2px_2px_rgba(20,40,70,0.7)] flex items-stretch text-[12.500px] text-[#444] tracking-[0.25px] border-t border-[#999]">
    <div class="w-[135px] border-r border-[#aaa] flex items-center pl-[10px]">
        <svg class="w-[17px] h-[15px] mr-[6px]" viewBox="0 0 17 15"><circle cx="5" cy="4" r="3" fill="#5a8fc4"/><circle cx="12" cy="4" r="3" fill="#4a7fb5"/><path d="M0 14C0 9 2 7.500 5 7.500S9 9 9 14ZM8 7.500C9 7.500 10 7 12 7C15 7 17 9 17 14H10C10 11 9.500 9 8 7.500Z" fill="#5a8fc4"/></svg>Uso compartido
    </div>
    <div class="w-[149px] border-r border-[#aaa] flex items-center pl-[11px]">
        <svg class="w-[14px] h-[15px] mr-[8px]" viewBox="0 0 14 15"><path fill="#f3a31a" d="M7 0C10 0 11 2.500 11 5C11 8 12 10 13.500 11.500V12.500H.5V11.500C2 10 3 8 3 5C3 2.500 4 0 7 0ZM5 13.500H9C9 14.500 8 15 7 15S5 14.500 5 13.500Z"/></svg>Alertas y acciones
    </div>
    <div class="w-[95px] border-r border-[#aaa] flex items-center pl-[14px]">
        <svg class="w-[8px] h-[15px] mr-[11px]" viewBox="0 0 8 15"><path d="M6.500 4V11C6.500 13 5.500 14 4 14S1.500 13 1.500 11V3C1.500 1.500 2.500 1 3.500 1S5 2 5 3V10" fill="none" stroke="#aaa" stroke-width="1.200"/></svg>Adjuntos
    </div>
    <div class="w-[118px] border-r border-[#aaa] flex items-center pl-[11px]">
        <svg class="w-[14px] h-[13px] mr-[8px]" viewBox="0 0 14 13"><path d="M.5 .5H13.500V10H9L8 12.500L6.500 10H.5Z" fill="#fff" stroke="#666"/></svg>Comentarios
    </div>
    <div class="w-[204px] border-r border-[#aaa] flex items-center pl-[10px]">
        <svg class="w-[15px] h-[15px] mr-[8px]" viewBox="0 0 15 15"><path d="M.5 5.500H11V14.500H.5Z" fill="#f5f5f5" stroke="#666"/><path d="M.5 5.500L6 10L11 5.500" fill="none" stroke="#666"/><circle cx="10.500" cy="4" r="4" fill="#6fae1f"/><text x="10.500" y="6.500" text-anchor="middle" font-size="7" font-weight="bold" fill="#fff" font-family="Liberation Sans">?</text></svg>Solicitudes de actualización
    </div>
    <div class="w-[113px] border-r border-[#aaa] flex items-center pl-[10px]">
        <svg class="w-[13px] h-[15px] mr-[9px]" viewBox="0 0 13 15"><rect x=".5" y=".5" width="12" height="14" fill="#fff" stroke="#777"/><path d="M3 3.500H10M3 6H10M3 8.500H10M3 11H10" stroke="#888"/></svg>Formularios
    </div>
    <div class="w-[92px] border-r border-[#aaa] flex items-center pl-[10px]">
        <svg class="w-[15px] h-[16px] mr-[7px]" viewBox="0 0 15 16"><ellipse cx="7.500" cy="8" rx="7" ry="8" fill="#4a83c0"/><path d="M5 1C8 1 11 3 11 5C11 7 8 6.500 8.500 9C9 11 7 13 6 14C5 11 3 9 2 6C3 3.500 4 2 5 1Z" fill="#6fae3f"/></svg>Publicar
    </div>
    <div class="flex-1 flex items-center pl-[9px]">
        <svg class="w-[17px] h-[11px] mr-[5px]" viewBox="0 0 17 11"><path d="M0 3H4M0 6H4M0 9H4M12 3H17M12 6H17M12 9H17" stroke="#888"/><path d="M4 6H6L8 1L10 10L11 6H13" fill="none" stroke="#5a8fc4"/></svg>Registro de actividad
    </div>
</div>

<!-- footer -->
<div class="h-[22px] pl-[21px] pr-[19px] flex items-center justify-between text-[10.700px] text-[#b9cfe3]">
    <span class="pt-[3px]">lokvi1912@gmail.com</span>
    <span class="pt-[3px] font-bold underline">Haga correr la voz: Obtenga recompensas</span>
</div>

<!-- bottom strip with background tabs -->
<div class="h-[3px] bg-[#3d3d3b] flex pl-[52px] gap-[4px]">
    <div class="w-[58px] border-t border-x border-white"></div>
    <div class="w-[58px] border-t border-x border-[#888]"></div>
    <div class="w-[58px] border-t border-x border-[#888]"></div>
</div>

<!-- windows activation watermark -->
<div class="absolute left-[1003px] top-[562px] pointer-events-none font-['Open_Sans',sans-serif] text-[#a8a8a8]/70 whitespace-nowrap">
    <div class="text-[19.200px] leading-[24px]">Activar Windows</div>
    <div class="text-[14.300px] leading-[20px] mt-[1px]">Ir a Configuración de PC para activar Windows.</div>
</div>

</body>
</html>
